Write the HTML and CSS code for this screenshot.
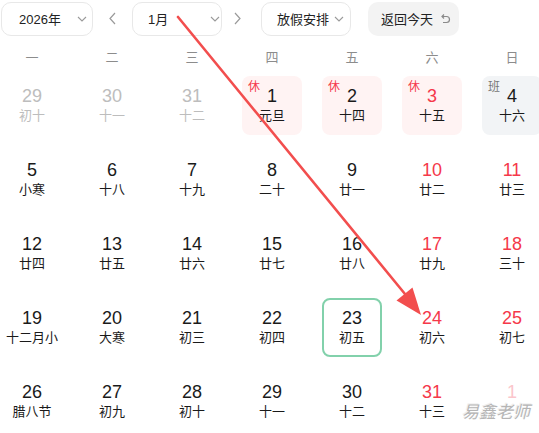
FILE: index.html
```html
<!DOCTYPE html>
<html lang="zh">
<head>
<meta charset="utf-8">
<link rel="stylesheet" href="styles.css">
</head>
<body>
<div class="page">
  <div class="toolbar">
    <div class="select year"><span>2026年</span><svg class="chev" viewBox="0 0 10 6"><path d="M1 1 L5 5 L9 1"/></svg></div>
    <div class="nav prev"><svg viewBox="0 0 7 13"><path d="M6 1 L1 6.5 L6 12"/></svg></div>
    <div class="select month"><span>1月</span><svg class="chev" viewBox="0 0 10 6"><path d="M1 1 L5 5 L9 1"/></svg></div>
    <div class="nav next"><svg viewBox="0 0 7 13"><path d="M1 1 L6 6.5 L1 12"/></svg></div>
    <div class="select holiday"><span>放假安排</span><svg class="chev" viewBox="0 0 10 6"><path d="M1 1 L5 5 L9 1"/></svg></div>
    <div class="today"><span>返回今天</span><svg class="undo" viewBox="0 0 12 12"><path d="M3 3.5 H7.5 A3 3 0 0 1 7.5 9.5 H4"/><path d="M5 1.5 L3 3.5 L5 5.5"/></svg></div>
  </div>

  <div class="weekdays">
    <div>一</div><div>二</div><div>三</div><div>四</div><div>五</div><div>六</div><div>日</div>
  </div>

  <div class="grid">
    <div class="cell other"><div class="day"><div class="num">29</div><div class="lunar">初十</div></div></div>
    <div class="cell other"><div class="day"><div class="num">30</div><div class="lunar">十一</div></div></div>
    <div class="cell other"><div class="day"><div class="num">31</div><div class="lunar">十二</div></div></div>
    <div class="cell"><div class="day rest"><span class="tag">休</span><div class="num">1</div><div class="lunar">元旦</div></div></div>
    <div class="cell"><div class="day rest"><span class="tag">休</span><div class="num">2</div><div class="lunar">十四</div></div></div>
    <div class="cell wkend"><div class="day rest"><span class="tag">休</span><div class="num">3</div><div class="lunar">十五</div></div></div>
    <div class="cell"><div class="day work"><span class="tag">班</span><div class="num">4</div><div class="lunar">十六</div></div></div>

    <div class="cell"><div class="day"><div class="num">5</div><div class="lunar">小寒</div></div></div>
    <div class="cell"><div class="day"><div class="num">6</div><div class="lunar">十八</div></div></div>
    <div class="cell"><div class="day"><div class="num">7</div><div class="lunar">十九</div></div></div>
    <div class="cell"><div class="day"><div class="num">8</div><div class="lunar">二十</div></div></div>
    <div class="cell"><div class="day"><div class="num">9</div><div class="lunar">廿一</div></div></div>
    <div class="cell wkend"><div class="day"><div class="num">10</div><div class="lunar">廿二</div></div></div>
    <div class="cell wkend"><div class="day"><div class="num">11</div><div class="lunar">廿三</div></div></div>

    <div class="cell"><div class="day"><div class="num">12</div><div class="lunar">廿四</div></div></div>
    <div class="cell"><div class="day"><div class="num">13</div><div class="lunar">廿五</div></div></div>
    <div class="cell"><div class="day"><div class="num">14</div><div class="lunar">廿六</div></div></div>
    <div class="cell"><div class="day"><div class="num">15</div><div class="lunar">廿七</div></div></div>
    <div class="cell"><div class="day"><div class="num">16</div><div class="lunar">廿八</div></div></div>
    <div class="cell wkend"><div class="day"><div class="num">17</div><div class="lunar">廿九</div></div></div>
    <div class="cell wkend"><div class="day"><div class="num">18</div><div class="lunar">三十</div></div></div>

    <div class="cell"><div class="day"><div class="num">19</div><div class="lunar">十二月小</div></div></div>
    <div class="cell"><div class="day"><div class="num">20</div><div class="lunar">大寒</div></div></div>
    <div class="cell"><div class="day"><div class="num">21</div><div class="lunar">初三</div></div></div>
    <div class="cell"><div class="day"><div class="num">22</div><div class="lunar">初四</div></div></div>
    <div class="cell"><div class="day selected"><div class="num">23</div><div class="lunar">初五</div></div></div>
    <div class="cell wkend"><div class="day"><div class="num">24</div><div class="lunar">初六</div></div></div>
    <div class="cell wkend"><div class="day"><div class="num">25</div><div class="lunar">初七</div></div></div>

    <div class="cell"><div class="day"><div class="num">26</div><div class="lunar">腊八节</div></div></div>
    <div class="cell"><div class="day"><div class="num">27</div><div class="lunar">初九</div></div></div>
    <div class="cell"><div class="day"><div class="num">28</div><div class="lunar">初十</div></div></div>
    <div class="cell"><div class="day"><div class="num">29</div><div class="lunar">十一</div></div></div>
    <div class="cell"><div class="day"><div class="num">30</div><div class="lunar">十二</div></div></div>
    <div class="cell wkend"><div class="day"><div class="num">31</div><div class="lunar">十三</div></div></div>
    <div class="cell next"><div class="day"><div class="num">1</div><div class="lunar"></div></div></div>
  </div>

  <svg class="arrow" viewBox="0 0 539 433" width="539" height="433">
    <line x1="178" y1="17" x2="405" y2="294" />
    <polygon points="421,315 396.5,300.5 412.5,287.5" />
  </svg>
  <div class="watermark">易鑫老师</div>
</div>
</body>
</html>
```

FILE: styles.css
```css
* { box-sizing: border-box; }
html, body { margin: 0; padding: 0; background: #fff; }
body {
  font-family: "Liberation Sans", "Noto Sans CJK SC", sans-serif;
  color: #1f1f1f;
  overflow: hidden;
}
.page {
  position: relative;
  width: 539px;
  height: 433px;
  overflow: hidden;
}
.toolbar {
  display: flex;
  align-items: center;
  padding: 1px 0 0 1px;
  height: 36px;
}
.select, .today {
  height: 34px;
  border-radius: 10px;
  display: flex;
  align-items: center;
  font-size: 13px;
  color: #222;
}
.select {
  border: 1px solid #e8e8e8;
  background: #fff;
}
.select .chev {
  width: 10px;
  height: 6px;
  fill: none;
  stroke: #9a9a9a;
  stroke-width: 1.1;
}
.year { width: 92px; padding-left: 17px; }
.year .chev { margin-left: 16px; }
.month { width: 90px; padding-left: 15px; }
.month .chev { margin-left: 42px; }
.holiday { width: 90px; padding-left: 15px; margin-left: 9px; }
.holiday .chev { margin-left: 5px; }
.nav {
  width: 39px;
  height: 34px;
  display: flex;
  align-items: center;
  justify-content: center;
}
.nav.next { width: 30px; }
.nav svg {
  width: 7px;
  height: 13px;
  fill: none;
  stroke: #9a9a9a;
  stroke-width: 1.2;
}
.today {
  width: 91px;
  margin-left: 17px;
  background: #f3f3f3;
  padding-left: 13px;
}
.today .undo {
  width: 12px;
  height: 12px;
  margin-left: 6px;
  fill: none;
  stroke: #8a8a8a;
  stroke-width: 1.2;
}
.weekdays {
  display: grid;
  grid-template-columns: repeat(7, 80px);
  margin-left: -8px;
  height: 40px;
  align-items: center;
  padding-top: 1px;
  font-size: 13px;
  color: #8c8c8c;
  text-align: center;
}
.grid {
  display: grid;
  grid-template-columns: repeat(7, 80px);
  grid-auto-rows: 74px;
  margin-left: -8px;
}
.cell {
  display: flex;
  justify-content: center;
}
.day {
  position: relative;
  width: 60px;
  height: 59px;
  border-radius: 8px;
  padding-top: 10px;
  text-align: center;
}
.num {
  font-size: 18px;
  line-height: 20px;
  color: #1a1a1a;
}
.lunar {
  font-size: 13px;
  line-height: 20px;
  color: #1a1a1a;
}
.wkend .num { color: #f5384a; }
.other .num, .other .lunar { color: #bdbdbd; }
.next .num { color: #fbc6cc; }
.rest { background: #fff3f3; }
.work { background: #f2f4f6; }
.tag {
  position: absolute;
  top: 4px;
  left: 6px;
  font-size: 12px;
  line-height: 14px;
  color: #f5384a;
}
.work .tag { color: #777; }
.selected {
  border: 2px solid #82d1ab;
  padding-top: 8px;
}
.arrow {
  position: absolute;
  left: 0;
  top: 0;
  pointer-events: none;
}
.arrow line {
  stroke: #f24e4e;
  stroke-width: 2.6;
  stroke-linecap: round;
}
.arrow polygon { fill: #f24e4e; }
.watermark {
  position: absolute;
  left: 462px;
  top: 402px;
  font-size: 17px;
  line-height: 22px;
  font-style: italic;
  color: #b5b5b5;
  text-shadow: 1px 1px 0 #fff, -1px -1px 0 #eee;
}
```
